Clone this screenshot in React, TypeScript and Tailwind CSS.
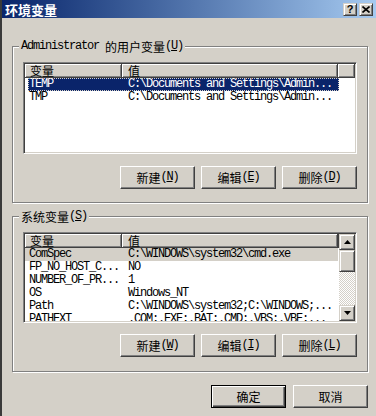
const mono = "font-['Liberation_Mono',monospace] text-[12px] leading-[13px] tracking-[-1.2px] whitespace-pre";
const cjk = "font-['Noto_Sans_CJK_SC',sans-serif] text-[12px] leading-[13px]";
const raised =
  "bg-[#d4d0c8] border border-t-white border-l-white border-r-[#404040] border-b-[#404040] shadow-[inset_-1px_-1px_#808080]";
const raisedSoft =
  "bg-[#d4d0c8] border border-t-[#d4d0c8] border-l-[#d4d0c8] border-r-[#404040] border-b-[#404040] shadow-[inset_1px_1px_#fff,inset_-1px_-1px_#808080]";

function Key({ k }: { k: string }) {
  return (
    <span className={mono}>
      (<span className="underline">{k}</span>)
    </span>
  );
}

function Button({ label, k, def }: { label: string; k?: string; def?: boolean }) {
  const frame = def
    ? "bg-[#d4d0c8] border border-black shadow-[inset_1px_1px_#fff,inset_-1px_-1px_#404040,inset_-2px_-2px_#808080]"
    : raised;
  return (
    <button className={`${frame} flex h-[23px] w-[75px] items-center justify-center text-black leading-none`}>
      <span className={cjk}>{label}</span>
      {k && <Key k={k} />}
    </button>
  );
}

function Arrow({ up }: { up?: boolean }) {
  return (
    <div className={`${raisedSoft} flex h-[16px] items-center justify-center`}>
      <svg width="7" height="4" viewBox="0 0 7 4">
        {up ? <polygon points="3.5,0 7,4 0,4" fill="#000" /> : <polygon points="0,0 7,0 3.5,4" fill="#000" />}
      </svg>
    </div>
  );
}

function ScrollBar() {
  return (
    <div className="flex w-[16px] shrink-0 flex-col">
      <Arrow up />
      <div className={`${raisedSoft} h-[22px]`} />
      <div className="flex-1 bg-[image:repeating-conic-gradient(#d4d0c8_0_25%,#ffffff_0_50%)] bg-[length:2px_2px]" />
      <Arrow />
    </div>
  );
}

function Header() {
  const cell = "h-[14px] border-r border-b border-[#404040] shadow-[inset_1px_1px_#fff,inset_-1px_-1px_#808080] flex items-center";
  return (
    <div className="flex h-[14px] shrink-0 bg-[#d4d0c8]">
      <div className={`${cell} w-[97px] pl-[5px]`}>
        <span className={cjk}>变量</span>
      </div>
      <div className={`${cell} w-[216px] pl-[6px]`}>
        <span className={cjk}>值</span>
      </div>
      <div className={`${cell} flex-1`} />
    </div>
  );
}

type RowData = { name: string; value: string };

function Row({ name, value, sel }: RowData & { sel?: "active" | "inactive" }) {
  if (sel === "active") {
    return (
      <div className="ml-[3px] flex h-[13px] w-[311px] shrink-0 items-center bg-[#0a246a] text-white outline-1 outline-dotted outline-[#d4d0c8] -outline-offset-1">
        <div className={`${mono} w-[94px] pl-[1px]`}>{name}</div>
        <div className={`${mono} w-[216px] pl-[6px]`}>{value}</div>
      </div>
    );
  }
  return (
    <div className={`flex h-[13px] w-[313px] shrink-0 items-center text-black ${sel === "inactive" ? "bg-[#d4d0c8]" : ""}`}>
      <div className={`${mono} w-[97px] pl-[4px]`}>{name}</div>
      <div className={`${mono} w-[216px] pl-[6px]`}>{value}</div>
    </div>
  );
}

function ListView({
  rows,
  height,
  selected,
  scroll,
}: {
  rows: RowData[];
  height: string;
  selected: "active" | "inactive";
  scroll?: boolean;
}) {
  return (
    <div
      className={`${height} flex border border-t-[#808080] border-l-[#808080] border-r-white border-b-white bg-white p-[1px] shadow-[inset_1px_1px_#404040,inset_-1px_-1px_#d4d0c8]`}
    >
      <div className="flex min-w-0 flex-1 flex-col overflow-hidden">
        <Header />
        {rows.map((r, i) => (
          <Row key={r.name} {...r} sel={i === 0 ? selected : undefined} />
        ))}
      </div>
      {scroll && <ScrollBar />}
    </div>
  );
}

function GroupBox({
  legend,
  children,
  className,
}: {
  legend: React.ReactNode;
  children: React.ReactNode;
  className: string;
}) {
  return (
    <fieldset
      className={`border border-[#808080] px-[10px] shadow-[inset_1px_1px_#fff,1px_1px_#fff] ${className}`}
    >
      <legend className="-ml-[4px] flex h-[14px] items-center bg-[#d4d0c8] px-[2px] leading-none text-black">
        {legend}
      </legend>
      {children}
    </fieldset>
  );
}

const userVars: RowData[] = [
  { name: "TEMP", value: "C:\\Documents and Settings\\Admin..." },
  { name: "TMP", value: "C:\\Documents and Settings\\Admin..." },
];

const sysVars: RowData[] = [
  { name: "ComSpec", value: "C:\\WINDOWS\\system32\\cmd.exe" },
  { name: "FP_NO_HOST_C...", value: "NO" },
  { name: "NUMBER_OF_PR...", value: "1" },
  { name: "OS", value: "Windows_NT" },
  { name: "Path", value: "C:\\WINDOWS\\system32;C:\\WINDOWS;..." },
  { name: "PATHEXT", value: ".COM;.EXE;.BAT;.CMD;.VBS;.VBE;..." },
];

export default function App() {
  return (
    <div className="flex h-[416px] w-[376px] flex-col overflow-hidden border-l-2 border-[#3a3a3a] bg-[#d4d0c8]">
      {/* title bar */}
      <div className="flex h-[18px] shrink-0 items-center justify-between bg-linear-to-r from-[#0a246a] to-[#a6caf0] pl-[3px] pr-[3px]">
        <span className="font-['Noto_Sans_CJK_SC',sans-serif] text-[13px] font-bold leading-none text-white">
          环境变量
        </span>
        <div className="flex gap-[2px]">
          <div className={`${raisedSoft} flex h-[13px] w-[14px] items-center justify-center`}>
            <span className="font-['Liberation_Sans',sans-serif] text-[11px] font-bold leading-none text-black">?</span>
          </div>
          <div className={`${raisedSoft} flex h-[13px] w-[14px] items-center justify-center`}>
            <svg width="8" height="7" viewBox="0 0 8 7">
              <path d="M0.5 0.5 L7.5 6.5 M7.5 0.5 L0.5 6.5" stroke="#000" strokeWidth="1.6" />
            </svg>
          </div>
        </div>
      </div>

      <div className="flex flex-1 flex-col pl-[10px] pr-[8px]">
        <GroupBox
          className="mt-[21px] pb-[13px]"
          legend={
            <>
              <span className={mono}>Administrator </span>
              <span className={cjk}>的用户变量</span>
              <Key k="U" />
            </>
          }
        >
          <div className="mt-[9px]">
            <ListView rows={userVars} height="h-[92px]" selected="active" />
          </div>
          <div className="mt-[12px] flex justify-end gap-[6px]">
            <Button label="新建" k="N" />
            <Button label="编辑" k="E" />
            <Button label="删除" k="D" />
          </div>
        </GroupBox>

        <GroupBox
          className="mt-[6px] pb-[14px]"
          legend={
            <>
              <span className={cjk}>系统变量</span>
              <Key k="S" />
            </>
          }
        >
          <div className="mt-[9px]">
            <ListView rows={sysVars} height="h-[91px]" selected="inactive" scroll />
          </div>
          <div className="mt-[11px] flex justify-end gap-[6px]">
            <Button label="新建" k="W" />
            <Button label="编辑" k="I" />
            <Button label="删除" k="L" />
          </div>
        </GroupBox>

        <div className="mt-[13px] flex justify-end gap-[7px]">
          <Button label="确定" def />
          <Button label="取消" />
        </div>
      </div>
    </div>
  );
}
